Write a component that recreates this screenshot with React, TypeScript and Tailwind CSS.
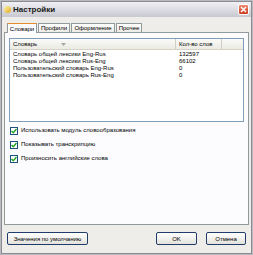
import React from 'react';

const rows = [
  { name: 'Словарь общей лексики Eng-Rus', count: '132597' },
  { name: 'Словарь общей лексики Rus-Eng', count: '66102' },
  { name: 'Пользовательский словарь Eng-Rus', count: '0' },
  { name: 'Пользовательский словарь Rus-Eng', count: '0' },
];

const options = [
  'Использовать модуль словообразования',
  'Показывать транскрипцию',
  'Произносить английские слова',
];

const tabs = [
  { label: 'Словари', w: 'w-[30px]' },
  { label: 'Профили', w: 'w-[32px]' },
  { label: 'Оформление', w: 'w-[44px]' },
  { label: 'Прочее', w: 'w-[26px]' },
];

const Check = () => (
  <span className="w-[8px] h-[8px] border border-[#1c5180] bg-white flex items-center justify-center">
    <svg width="6" height="6" viewBox="0 0 6 6">
      <path d="M0.5 3 L2.3 4.8 L5.5 1" stroke="#21a121" strokeWidth="1.4" fill="none" />
    </svg>
  </span>
);

const Btn: React.FC<{ label: string; className: string }> = ({ label, className }) => (
  <button className={`h-[13px] rounded-[2px] border border-[#1f3c6a] bg-gradient-to-b from-white to-[#e3e2dc] text-[6px] leading-none text-black flex items-center justify-center ${className}`}>
    {label}
  </button>
);

export default function App() {
  return (
    <div className="w-[253px] h-[255px] bg-[#b9b9c0] p-[1px] font-['Liberation_Sans',sans-serif]">
      <div className="w-full h-full flex flex-col bg-[#eeede9] border border-[#8b8b93]">
        {/* Заголовок */}
        <div className="h-[15px] flex items-center px-[2px] bg-gradient-to-b from-[#f2f2f5] via-[#dcdce2] to-[#c8c8d0]">
          <span className="w-[7px] h-[7px] rounded-full bg-gradient-to-br from-[#fff6a0] to-[#e0a800] mr-[2px]" />
          <span className="text-[8px] font-bold text-[#1a1a1a] leading-none">Настройки</span>
          <span className="ml-auto w-[11px] h-[11px] rounded-[2px] bg-gradient-to-b from-[#f08a70] to-[#c8391c] border border-white flex items-center justify-center">
            <svg width="7" height="7" viewBox="0 0 7 7">
              <path d="M1 1 L6 6 M6 1 L1 6" stroke="white" strokeWidth="1.4" />
            </svg>
          </span>
        </div>

        <div className="flex-1 flex flex-col px-[2px] pt-[5px]">
          {/* Вкладки */}
          <div className="flex items-end h-[10px] pl-[3px]">
            {tabs.map((t, i) => (
              <div
                key={t.label}
                className={`${t.w} text-[6px] leading-none flex items-center justify-center border border-[#919b9c] border-b-0 ${
                  i === 0
                    ? 'h-[10px] bg-[#fcfcfe] border-t-[#e68b2c] relative top-[1px] z-10'
                    : 'h-[9px] bg-gradient-to-b from-white to-[#ecebe5] ml-[1px]'
                }`}
              >
                {t.label}
              </div>
            ))}
          </div>

          {/* Панель */}
          <div className="h-[193px] border border-[#919b9c] bg-[#fcfcfe] px-[4px] pt-[5px] flex flex-col">
            <div className="h-[84px] border border-[#7f9db9] bg-white flex flex-col">
              <div className="h-[11px] flex bg-gradient-to-b from-[#fafaf8] to-[#ebeae3] border-b border-[#d6d3c6] text-[6px] leading-none">
                <div className="w-[166px] flex items-center pl-[3px] border-r border-[#d0cec2]">
                  Словарь
                  <svg className="ml-[24px]" width="5" height="3" viewBox="0 0 5 3">
                    <path d="M0 0 L5 0 L2.5 3 Z" fill="#a8a8a0" />
                  </svg>
                </div>
                <div className="w-[46px] flex items-center pl-[3px] border-r border-[#d0cec2]">Кол-во слов</div>
              </div>
              <div className="pt-[1px] text-[6px] leading-[7px]">
                {rows.map((r) => (
                  <div key={r.name} className="flex">
                    <span className="w-[166px] pl-[3px]">{r.name}</span>
                    <span className="pl-[3px]">{r.count}</span>
                  </div>
                ))}
              </div>
            </div>

            <div className="flex flex-col gap-[5px] mt-[4px] pl-[1px]">
              {options.map((o) => (
                <div key={o} className="flex items-center gap-[3px] text-[6px] leading-[9px]">
                  <Check />
                  {o}
                </div>
              ))}
            </div>
          </div>

          {/* Кнопки */}
          <div className="flex items-center mt-[7px] px-[3px]">
            <Btn label="Значения по умолчанию" className="w-[81px]" />
            <Btn label="OK" className="w-[41px] ml-auto" />
            <Btn label="Отмена" className="w-[40px] ml-[9px]" />
          </div>
        </div>
      </div>
    </div>
  );
}
